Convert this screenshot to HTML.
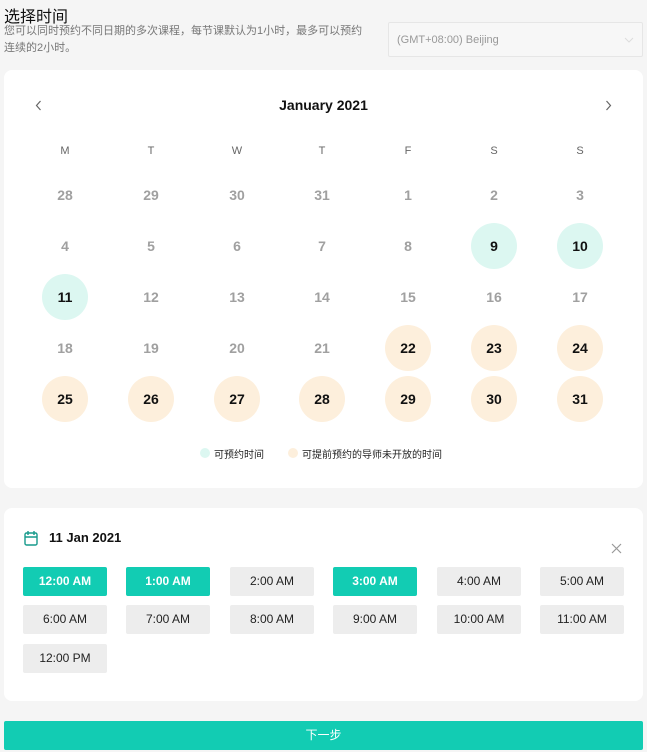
<!DOCTYPE html>
<html><head><meta charset="utf-8"><style>
*{box-sizing:border-box;margin:0;padding:0}
body{width:647px;height:752px;background:#f5f5f5;font-family:"Liberation Sans","Noto Sans CJK SC",sans-serif;position:relative;overflow:hidden}
.a{position:absolute}
.card{position:absolute;background:#fff;border-radius:8px;left:4px;width:639px}
.d{position:absolute;width:46px;height:46px;border-radius:50%;text-align:center;line-height:46px;font-size:14px;color:#a0a0a0;font-weight:bold}
.g{background:#dcf7f1;color:#111}
.p{background:#fdefdc;color:#111}
.h{position:absolute;width:46px;text-align:center;font-size:11px;color:#666;top:145px}
.s{position:absolute;width:84px;height:29px;border-radius:2px;background:#ededed;text-align:center;line-height:29px;font-size:12px;color:#222}
.s.on{background:#12ccb3;color:#fff;font-weight:bold}
</style></head><body>
<div class="a" style="left:4px;top:3px;font-size:16px;color:#111">选择时间</div>
<div class="a" style="left:4px;top:23px;width:366px;font-size:11px;line-height:17px;color:#777">您可以同时预约不同日期的多次课程，每节课默认为1小时，最多可以预约连续的2小时。</div>
<div class="a" style="left:388px;top:22px;width:255px;height:35px;border:1px solid #e6e6e6;background:#f7f7f7;border-radius:2px;font-size:11px;color:#999;line-height:34px;padding-left:8px">(GMT+08:00) Beijing
<svg class="a" style="right:8px;top:13px" width="10" height="8" viewBox="0 0 10 8"><path d="M1 2l4 4 4-4" fill="none" stroke="#ddd" stroke-width="1"/></svg></div>

<div class="card" style="top:70px;height:418px">
<svg class="a" style="left:31px;top:30px" width="7" height="11" viewBox="0 0 7 11"><path d="M5.5 1L1.5 5.5 5.5 10" fill="none" stroke="#666" stroke-width="1.2"/></svg>
<div class="a" style="left:0;width:639px;top:27px;text-align:center;font-size:14px;font-weight:bold;color:#111">January 2021</div>
<svg class="a" style="left:601px;top:30px" width="7" height="11" viewBox="0 0 7 11"><path d="M1.5 1l4 4.5-4 4.5" fill="none" stroke="#666" stroke-width="1.2"/></svg>
</div>
<div id="cal"></div>
<div class="a" style="left:200px;top:448px;width:10px;height:10px;border-radius:50%;background:#dcf7f1"></div>
<div class="a" style="left:214px;top:446px;font-size:10px;color:#222">可预约时间</div>
<div class="a" style="left:288px;top:448px;width:10px;height:10px;border-radius:50%;background:#fdefdc"></div>
<div class="a" style="left:302px;top:446px;font-size:10px;color:#222">可提前预约的导师未开放的时间</div>

<div class="card" style="top:508px;height:193px"></div>
<svg class="a" style="left:24px;top:530px" width="14" height="16" viewBox="0 0 14 16"><rect x="1" y="3" width="12" height="12" rx="1.5" fill="none" stroke="#179a8c" stroke-width="1.4"/><path d="M1 7h12M4 1v4M10 1v4" stroke="#179a8c" stroke-width="1.4"/></svg>
<div class="a" style="left:49px;top:530px;font-size:13px;font-weight:bold;color:#111">11 Jan 2021</div>
<svg class="a" style="left:611px;top:543px" width="11" height="11" viewBox="0 0 11 11"><path d="M1 1l9 9M10 1l-9 9" stroke="#999" stroke-width="1.2"/></svg>
<div id="slots"></div>
<div class="a" style="left:4px;top:721px;width:639px;height:29px;background:#12ccb3;border-radius:2px;color:#fff;text-align:center;line-height:29px;font-size:12px">下一步</div>
<script>
var xs=[65,151,237,322,408,494,580],hd="MTWTFSS",c="";
for(var i=0;i<7;i++)c+='<div class="h" style="left:'+(xs[i]-23)+'px">'+hd[i]+'</div>';
var days=[28,29,30,31];for(var i=1;i<=31;i++)days.push(i);
for(var k=0;k<35;k++){var r=Math.floor(k/7),col=k%7,v=days[k],cl="";
if(k>=4){if(v==9||v==10||v==11)cl=" g";else if(v>=22)cl=" p";}
c+='<div class="d'+cl+'" style="left:'+(xs[col]-23)+'px;top:'+(172+r*51)+'px">'+v+'</div>';}
document.getElementById('cal').innerHTML=c;
var t=["12:00 AM","1:00 AM","2:00 AM","3:00 AM","4:00 AM","5:00 AM","6:00 AM","7:00 AM","8:00 AM","9:00 AM","10:00 AM","11:00 AM","12:00 PM"],sx=[23,126,230,333,437,540],sy=[567,605,644],s="";
for(var k=0;k<13;k++){var on=(k==0||k==1||k==3)?" on":"";s+='<div class="s'+on+'" style="left:'+sx[k%6]+'px;top:'+sy[Math.floor(k/6)]+'px">'+t[k]+'</div>';}
document.getElementById('slots').innerHTML=s;
</script>
</body></html>
